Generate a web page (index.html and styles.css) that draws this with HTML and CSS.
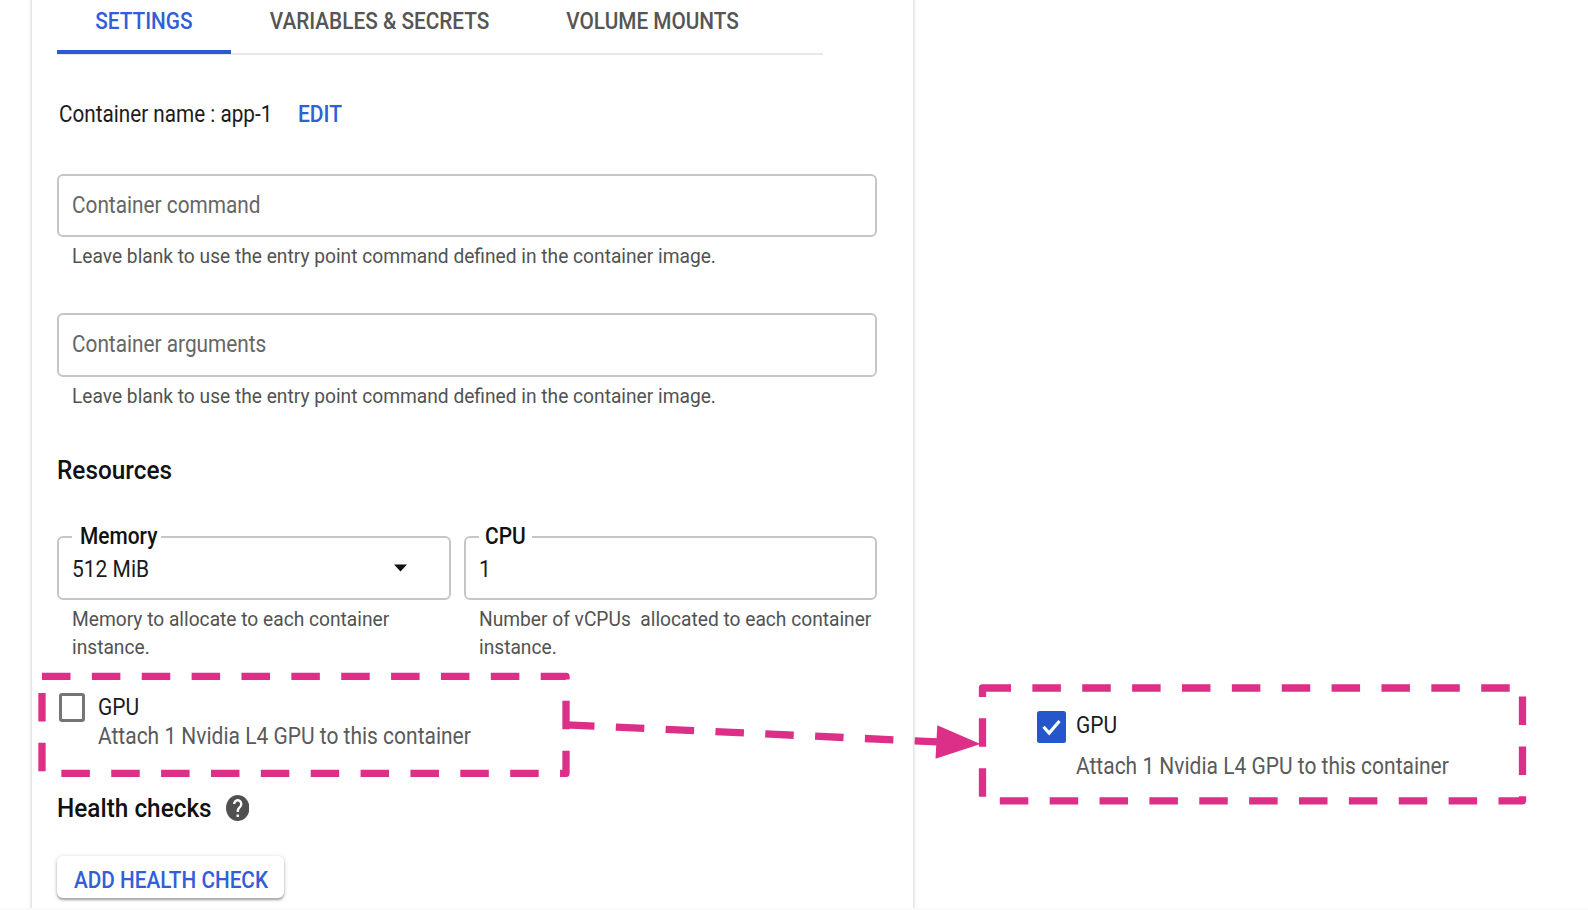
FILE: index.html
```
<!DOCTYPE html>
<html lang="en">
<head>
<meta charset="utf-8">
<title>Container settings</title>
<link rel="stylesheet" href="styles.css">
</head>
<body>
<main class="page">
  <section class="panel">
    <nav class="tabs">
      <a class="tab tab-settings active"><span>SETTINGS</span></a>
      <a class="tab tab-variables"><span>VARIABLES &amp; SECRETS</span></a>
      <a class="tab tab-volumes"><span>VOLUME MOUNTS</span></a>
    </nav>

    <div class="name-row">
      <div class="name"><span class="t">Container name : app-1</span></div>
      <a class="link"><span class="t">EDIT</span></a>
    </div>

    <div class="field field-command"><span class="t placeholder">Container command</span></div>
    <p class="help"><span class="t">Leave blank to use the entry point command defined in the container image.</span></p>

    <div class="field field-arguments"><span class="t placeholder">Container arguments</span></div>
    <p class="help"><span class="t">Leave blank to use the entry point command defined in the container image.</span></p>

    <h2 class="heading resources"><span class="t">Resources</span></h2>

    <div class="resource-row">
      <div class="col-memory">
        <fieldset class="outlined">
          <legend class="legend-memory"><span class="t">Memory</span></legend>
          <div class="value">
            <span class="t">512 MiB</span>
            <svg class="caret" width="13" height="8" viewBox="0 0 13 8"><path d="M0 .5h13L6.5 7.5z"/></svg>
          </div>
        </fieldset>
        <p class="help"><span class="t">Memory to allocate to each container<br>instance.</span></p>
      </div>
      <div class="col-cpu">
        <fieldset class="outlined">
          <legend class="legend-cpu"><span class="t">CPU</span></legend>
          <div class="value"><span class="t">1</span></div>
        </fieldset>
        <p class="help"><span class="t">Number of vCPUs&nbsp; allocated to each container<br>instance.</span></p>
      </div>
    </div>

    <div class="gpu gpu-off">
      <span class="box"></span>
      <div class="gpu-text">
        <div class="gpu-label"><span class="t">GPU</span></div>
        <div class="gpu-desc"><span class="t">Attach 1 Nvidia L4 GPU to this container</span></div>
      </div>
    </div>

    <div class="health-row">
      <h2 class="heading health"><span class="t">Health checks</span></h2>
      <svg class="help-icon" width="23.5" height="26" viewBox="2 2 20 20" preserveAspectRatio="none"><path d="M12 2C6.48 2 2 6.48 2 12s4.480 10 10 10 10-4.480 10-10S17.520 2 12 2zm1 17h-2v-2h2v2zm2.070-7.750l-.9.920C13.450 12.900 13 13.500 13 15h-2v-.5c0-1.100.45-2.100 1.170-2.830l1.240-1.260c.370-.360.590-.860.590-1.410 0-1.100-.9-2-2-2s-2 .9-2 2H8c0-2.210 1.790-4 4-4s4 1.790 4 4c0 .880-.360 1.680-.930 2.250z"/></svg>
    </div>

    <button class="button"><span class="t">ADD HEALTH CHECK</span></button>
  </section>

  <aside class="gpu gpu-on">
    <svg class="checked" width="29" height="32" viewBox="0 0 29 32"><rect width="29" height="32" rx="2.500"/><path d="M6.500 15.700L12.200 22L22.500 10"/></svg>
    <div class="gpu-text">
      <div class="gpu-label"><span class="t">GPU</span></div>
      <div class="gpu-desc"><span class="t">Attach 1 Nvidia L4 GPU to this container</span></div>
    </div>
  </aside>

  <svg class="callouts" width="1588" height="910" viewBox="0 0 1588 910">
    <g class="dashes">
      <path d="M42 676.300H566V773.300H42Z"/>
      <path d="M982.500 688H1522.500V800.800H982.500Z"/>
      <path d="M566 724.800L937 741.800"/>
    </g>
    <path class="arrow-head" d="M937.300 725.300L980.500 744L935.500 758.800Z"/>
  </svg>
</main>
<footer class="strip"></footer>
</body>
</html>
```
FILE: styles.css
```
* { box-sizing: border-box; }

body {
  margin: 0;
  background: #fff;
  font-family: Roboto, "Liberation Sans", sans-serif;
  font-size: 23px;
  color: #1c1c1c;
}

.page {
  position: relative;
  display: flex;
  align-items: flex-start;
  height: 908px;
  overflow: hidden;
}

.strip { height: 2px; background: #fafafa; }

.panel {
  width: 881px;
  height: 908px;
  margin-left: 32px;
  padding: 0 25px;
  flex: none;
  box-shadow: 0 0 0 1.500px #e6e6e6, 0 0 5px 1px #ececec;
}

/* Type is set slightly condensed throughout. */
.t {
  display: inline-block;
  white-space: nowrap;
  transform: scaleX(.912);
  transform-origin: 0 50%;
}

.tabs {
  display: flex;
  width: 766px;
  height: 55px;
  border-bottom: 2px solid #e8e8e8;
}

.tab {
  display: flex;
  justify-content: center;
  height: 54px;
  line-height: 43px;
  font-weight: 500;
  color: #555;
  white-space: nowrap;
}
.tab span { transform: scaleX(.903); }
.tab-settings { width: 174px; }
.tab-variables { width: 297px; }
.tab-volumes { width: 250px; }
.tab.active { color: #2f60d6; border-bottom: 4px solid #2b5bd3; }

.name-row {
  display: flex;
  margin-top: 46px;
  height: 28px;
  line-height: 28px;
}
.name { width: 240.500px; padding-left: 1.600px; }
.name .t { transform: scaleX(.9); }
.link { color: #2f60d6; font-weight: 500; }

.field {
  display: flex;
  align-items: center;
  width: 820px;
  height: 63px;
  padding-left: 12.500px;
  border: 2px solid #c6c6c6;
  border-radius: 6px;
}
.field-command { margin-top: 45px; padding-bottom: 1px; }
.field-arguments { margin-top: 43px; height: 64px; padding-bottom: 1px; }
.placeholder { color: #666; transform: scaleX(.904); }

.help {
  margin: 5px 0 0 14.500px;
  font-size: 21px;
  line-height: 28px;
  color: #525252;
}
.help .t { transform: scaleX(.913); }

.heading { margin: 0; font-size: 26px; font-weight: 500; line-height: 30px; color: #111; }
.heading .t { transform: scaleX(.937); }
.resources { margin-top: 45px; }

.resource-row { display: flex; gap: 13px; margin-top: 52px; }
.col-memory { width: 394px; }
.col-cpu { width: 413px; }

.outlined {
  min-width: 0;
  height: 77px;
  margin: -14px 0 0;
  padding: 0 0 0 12.500px;
  border: 2px solid #c6c6c6;
  border-radius: 6px;
}
.outlined legend {
  height: 28px;
  padding: 0 0 0 8px;
  line-height: 28px;
  font-weight: 500;
  color: #111;
}
.legend-memory { width: 89px; }
.outlined .legend-cpu { width: 53px; padding-left: 6.500px; }
.outlined legend .t { transform: scaleX(.91); }

.value {
  display: flex;
  align-items: center;
  height: 28px;
  margin-top: 5px;
  line-height: 28px;
}
.caret { margin: -4px 0 0 237.500px; fill: #111; }

.gpu { display: flex; line-height: 28px; }
.gpu-off { margin-top: 32px; height: 58px; }
.gpu-off .gpu-text { padding-top: 1px; }
.box {
  width: 26px;
  height: 29px;
  margin: 0 13px 0 1.500px;
  border: 3px solid #757575;
  border-radius: 3px;
}
.gpu-desc { margin-top: 1px; color: #5a5a5a; }

.gpu-on { margin: 710px 0 0 124px; height: 80px; }
.gpu-on .gpu-text { padding-top: 1.500px; }
.gpu-on .gpu-desc { margin-top: 13px; }
.checked { margin: 1px 9.500px 0 0; flex: none; }
.checked rect { fill: #2457cb; }
.checked path { fill: none; stroke: #fff; stroke-width: 3.200; }

.health-row { display: flex; align-items: center; margin-top: 42px; height: 30px; }
.health { width: 168.500px; }
.help-icon { fill: #505050; }

.button {
  display: flex;
  align-items: center;
  width: 227px;
  height: 42px;
  margin-top: 33px;
  padding: 7px 0 0 16.500px;
  border: 0;
  border-radius: 6px;
  background: #fff;
  box-shadow: 0 2px 2px #aaa, 0 1px 5px #d0d0d0;
  font: 500 23px/28px Roboto, "Liberation Sans", sans-serif;
  color: #2f60d6;
}
.button .t { transform: scaleX(.902); }

/* Dashed callouts drawn over the form. */
.callouts { position: absolute; left: 0; top: 0; }
.dashes {
  fill: none;
  stroke: #dc2f87;
  stroke-width: 7.300;
  stroke-linejoin: round;
  stroke-dasharray: 28.500 21.370;
}
.arrow-head { fill: #dc2f87; }
```
